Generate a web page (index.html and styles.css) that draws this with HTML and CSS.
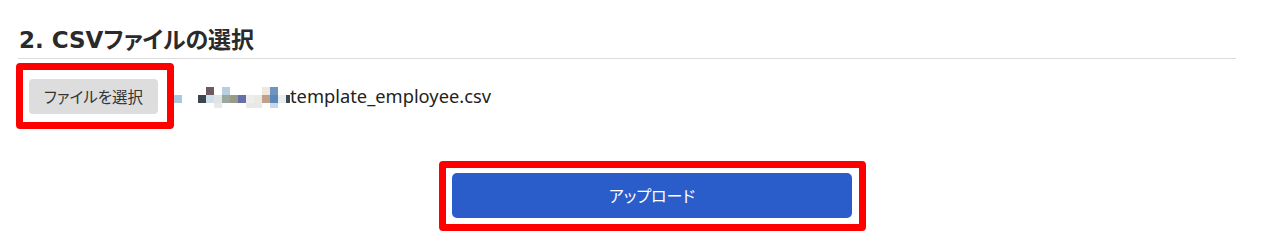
FILE: index.html
```html
<!DOCTYPE html>
<html lang="ja">
<head>
<meta charset="utf-8">
<title>CSVファイルの選択</title>
<link rel="stylesheet" href="styles.css">
</head>
<body>
<section class="section">
  <h2 class="title">2. CSVファイルの選択</h2>
  <div class="file-row">
    <div class="mark mark-file">
      <button class="file-btn" type="button">ファイルを選択</button>
    </div>
    <div class="mosaic" aria-hidden="true">
      <span></span><span></span><span></span><span></span><span style="background:#6b5a62"></span><span></span><span style="background:#b8cfe0"></span><span></span><span></span><span></span><span></span><span style="background:#f3e6da"></span><span style="background:#6e94c0"></span><span></span><span></span>
      <span style="background:#a8c8e0"></span><span></span><span></span><span style="background:#3c4650"></span><span style="background:#cfe0ea"></span><span style="background:#e0e4e4"></span><span style="background:#9aa8a0"></span><span style="background:#999a88"></span><span style="background:#6670a8"></span><span style="background:#eeeeee"></span><span style="background:#eaeae2"></span><span style="background:#c0a08a"></span><span style="background:#5a88b8"></span><span style="background:#e8eef0"></span><span style="background:#3a4850"></span>
      <span></span><span></span><span></span><span></span><span></span><span style="background:#e8e8e8"></span><span></span><span></span><span></span><span style="background:#e8e8e8"></span><span style="background:#e8e8e8"></span><span></span><span style="background:#c8d8e8"></span><span></span><span></span>
    </div>
    <span class="filename">template_employee.csv</span>
  </div>
  <div class="upload-row">
    <div class="mark mark-upload">
      <button class="upload-btn" type="button">アップロード</button>
    </div>
  </div>
</section>
</body>
</html>
```

FILE: styles.css
```css
html, body {
  margin: 0;
  padding: 0;
  background: #ffffff;
}

body {
  font-family: "Noto Sans", "Noto Sans CJK JP", sans-serif;
  color: #222222;
}

.section {
  padding: 22px 49px 0 18px;
}

.title {
  margin: 0;
  font-family: "DejaVu Sans", "Noto Sans CJK JP", sans-serif;
  font-size: 23px;
  font-weight: bold;
  line-height: 36px;
  height: 36px;
  color: #2a2a2a;
  font-feature-settings: "palt";
  padding-left: 1px;
  border-bottom: 1px solid #dcdcdc;
}

.file-row {
  display: flex;
  align-items: flex-start;
  margin-top: 4px;
  margin-left: -2px;
}

.mark {
  border: 7px solid #ff0000;
  border-radius: 4px;
}

.mark-file {
  padding: 9px 9px 8px 6px;
}

.file-btn {
  display: block;
  width: 129px;
  height: 35px;
  padding: 0;
  border: 0;
  border-radius: 4px;
  background: #dddddd;
  color: #333333;
  font-family: "Noto Sans CJK JP", sans-serif;
  font-size: 15.5px;
  font-feature-settings: "palt";
  line-height: 35px;
  text-align: center;
}

.mosaic {
  display: grid;
  grid-template-columns: repeat(14, 8px) 4px;
  grid-template-rows: 8px 8px 5px;
  margin-top: 24px;
}

.filename {
  margin-top: 21px;
  font-family: "Noto Sans", sans-serif;
  font-size: 18.3px;
  line-height: 24px;
  color: #222222;
}

.upload-row {
  display: flex;
  justify-content: center;
  margin-top: 32px;
  padding-left: 51px;
}

.mark-upload {
  padding: 5px 7px 6px 6px;
}

.upload-btn {
  display: block;
  width: 400px;
  height: 45px;
  padding: 0;
  border: 0;
  border-radius: 5px;
  background: #2b5dca;
  color: #ffffff;
  font-family: "Noto Sans CJK JP", sans-serif;
  font-size: 16px;
  font-feature-settings: "palt";
  line-height: 45px;
  text-align: center;
}
```
